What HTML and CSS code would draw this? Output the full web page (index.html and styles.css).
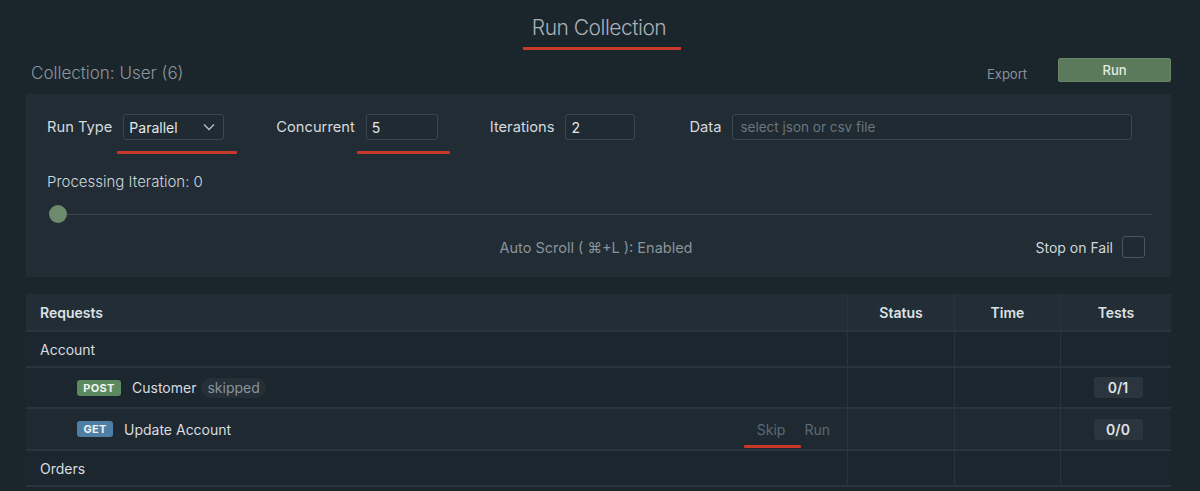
FILE: index.html
```html
<!DOCTYPE html>
<html>
<head>
<meta charset="utf-8">
<title>Run Collection</title>
<link rel="stylesheet" href="styles.css">
</head>
<body>
<div class="page">
  <div class="title-wrap"><h1 class="title">Run Collection</h1></div>
  <div class="toolbar">
    <div class="collection">Collection: User (6)</div>
    <div class="actions">
      <span class="export">Export</span>
      <button class="run-btn">Run</button>
    </div>
  </div>

  <div class="panel">
    <div class="fields">
      <div class="field">
        <span class="label">Run Type</span>
        <div class="select marked mark-runtype">
          <span>Parallel</span>
          <svg class="chev" width="12" height="8" viewBox="0 0 12 8"><polyline points="1,1.5 6,6.5 11,1.5" fill="none" stroke="#b9c0c5" stroke-width="1.3"/></svg>
        </div>
      </div>
      <div class="field">
        <span class="label">Concurrent</span>
        <div class="input w-conc marked mark-conc">5</div>
      </div>
      <div class="field">
        <span class="label">Iterations</span>
        <div class="input w-iter">2</div>
      </div>
      <div class="field field-data">
        <span class="label">Data</span>
        <div class="input w-data placeholder">select json or csv file</div>
      </div>
    </div>
    <div class="processing">Processing Iteration: 0</div>
    <div class="slider">
      <span class="thumb"></span>
      <span class="track"></span>
    </div>
    <div class="bottom-row">
      <span></span>
      <span class="autoscroll">Auto Scroll ( ⌘+L ): Enabled</span>
      <span class="stop">Stop on Fail <span class="checkbox"></span></span>
    </div>
  </div>

  <div class="table">
    <div class="row head">
      <div class="cell req">Requests</div>
      <div class="cell center">Status</div>
      <div class="cell center">Time</div>
      <div class="cell center">Tests</div>
    </div>
    <div class="row group">
      <div class="cell req">Account</div>
      <div class="cell sep"></div>
      <div class="cell sep"></div>
      <div class="cell sep"></div>
    </div>
    <div class="row item">
      <div class="cell req indent">
        <span class="badge post">POST</span>
        <span class="name">Customer</span>
        <span class="pill">skipped</span>
      </div>
      <div class="cell sep"></div>
      <div class="cell sep"></div>
      <div class="cell sep center"><span class="tests">0/1</span></div>
    </div>
    <div class="row item hover">
      <div class="cell req indent">
        <span class="badge get">GET</span>
        <span class="name">Update Account</span>
        <span class="row-actions">
          <span class="act marked mark-skip">Skip</span>
          <span class="act">Run</span>
        </span>
      </div>
      <div class="cell sep"></div>
      <div class="cell sep"></div>
      <div class="cell sep center"><span class="tests">0/0</span></div>
    </div>
    <div class="row group">
      <div class="cell req">Orders</div>
      <div class="cell sep"></div>
      <div class="cell sep"></div>
      <div class="cell sep"></div>
    </div>
  </div>
</div>
</body>
</html>
```

FILE: styles.css
```css
* { box-sizing: border-box; }
html, body {
  margin: 0;
  padding: 0;
  background: #1b252c;
  height: 100%;
  overflow: hidden;
}
body {
  font-family: Inter, "Noto Sans", "Liberation Sans", sans-serif;
  color: #d3d9dd;
}
.page {
  padding: 0 29px 0 26px;
}
.title-wrap {
  display: flex;
  justify-content: center;
  padding-top: 14px;
  height: 58px;
}
.title {
  margin: 0 0 0 7px;
  font-size: 21px;
  font-weight: 300;
  line-height: 28px;
  color: #a8b0b5;
  padding: 0 15px 5px 9px;
  border-bottom: 3px solid #c9392a;
  height: 36px;
  letter-spacing: -0.5px;
}
.toolbar {
  display: flex;
  justify-content: space-between;
  align-items: center;
  height: 28px;
}
.collection {
  margin-left: 5px;
  font-size: 17px;
  font-weight: 300;
  color: #8c969c;
  padding-top: 2px;
}
.actions {
  display: flex;
  align-items: center;
  gap: 31px;
}
.export {
  font-size: 13px;
  color: #8a9399;
  padding-top: 3px;
}
.run-btn {
  width: 113px;
  height: 24px;
  margin-bottom: 4px;
  border: 1px solid #668666;
  border-radius: 2px;
  background: #5a7a5b;
  color: #e3ece3;
  font-family: inherit;
  font-size: 13px;
  font-weight: 500;
}
.panel {
  margin-top: 8px;
  background: #212c35;
  padding: 20px 19px 19px 21px;
  height: 183px;
}
.fields {
  display: flex;
  align-items: center;
  height: 26px;
}
.field {
  display: flex;
  align-items: center;
  gap: 11px;
}
.field + .field { margin-left: 52px; }
.field.field-data { margin-left: 54px; }
.label {
  font-size: 14.7px;
  color: #d5dade;
}
.select, .input {
  height: 26px;
  border: 1px solid #3b474f;
  border-radius: 3px;
  background: #1f2a32;
  font-size: 14px;
  color: #e4e7e9;
  display: flex;
  align-items: center;
  padding: 0 5px;
}
.select {
  width: 101px;
  justify-content: space-between;
  padding-right: 8px;
}
.chev { display: block; }
.w-conc { width: 72px; }
.w-iter { width: 70px; }
.w-data { width: 400px; }
.placeholder {
  color: #6b757c;
  font-size: 13.5px;
  padding-left: 7px;
}
.marked { position: relative; }
.marked::after {
  content: "";
  position: absolute;
  height: 3px;
  background: #c9392a;
  border-radius: 1px;
}
.mark-runtype::after { left: -7px; right: -14px; top: 36px; }
.mark-conc::after { left: -10px; right: -13px; top: 36px; }
.mark-skip::after { left: -13px; right: -16px; top: 24px; }

.processing {
  margin-top: 32px;
  font-size: 15px;
  font-weight: 300;
  line-height: 20px;
  color: #d0d6da;
}
.slider {
  margin-top: 13px;
  display: flex;
  align-items: center;
  height: 18px;
  padding-left: 2px;
}
.thumb {
  width: 18px;
  height: 18px;
  border-radius: 50%;
  background: #6e8a6c;
  flex: none;
}
.track {
  flex: 1;
  height: 1px;
  background: #3b474f;
}
.bottom-row {
  margin-top: 13px;
  display: grid;
  grid-template-columns: 1fr auto 1fr;
  align-items: center;
  height: 22px;
  padding-right: 7px;
}
.autoscroll {
  font-size: 14.5px;
  color: #8a949a;
  padding-top: 1px;
}
.stop {
  justify-self: end;
  display: flex;
  align-items: center;
  gap: 9px;
  font-size: 14px;
  color: #d0d6da;
}
.checkbox {
  width: 23px;
  height: 22px;
  border: 1px solid #4a555d;
  border-radius: 3px;
  background: #1f2a32;
}

.table {
  margin-top: 17px;
}
.row {
  display: grid;
  grid-template-columns: 821px 107px 106px 111px;
  border-bottom: 2px solid #29343c;
  background: #1c262e;
}
.row.head {
  height: 38px;
  background: #222d36;
  font-weight: 600;
  font-size: 14px;
  color: #dde2e5;
}
.row.group { height: 36px; }
.row.item { height: 41px; }
.row.item.hover { height: 42px; background: #1f2931; }
.cell {
  display: flex;
  align-items: center;
  font-size: 14px;
}
.row.head .cell { font-weight: 600; }
.row.head .cell + .cell,
.cell.sep {
  border-left: 1px solid #29343c;
}
.req {
  padding-left: 14px;
  color: #d7dce0;
}
.row.head .req { color: #dde2e5; }
.center { justify-content: center; }
.indent { padding-left: 51px; }
.badge {
  font-size: 11px;
  font-weight: 700;
  color: #eef3ee;
  height: 16px;
  line-height: 16px;
  border-radius: 3px;
  letter-spacing: 0.3px;
  text-align: center;
}
.post { background: #5b8a61; width: 44px; }
.get { background: #4f7fa7; width: 36px; }
.name {
  margin-left: 11px;
  color: #d7dce0;
}
.pill {
  margin-left: 5px;
  background: #252f38;
  color: #89939a;
  padding: 0 6px;
  height: 20px;
  line-height: 20px;
  border-radius: 10px;
}
.row-actions {
  margin-left: auto;
  margin-right: 17px;
  display: flex;
  gap: 19px;
}
.act {
  color: #5c6a74;
  font-size: 14px;
}
.tests {
  background: #2b353d;
  color: #e0e4e7;
  font-weight: 600;
  font-size: 14px;
  width: 49px;
  height: 21px;
  line-height: 21px;
  text-align: center;
  border-radius: 3px;
  margin-left: 4px;
}
```
